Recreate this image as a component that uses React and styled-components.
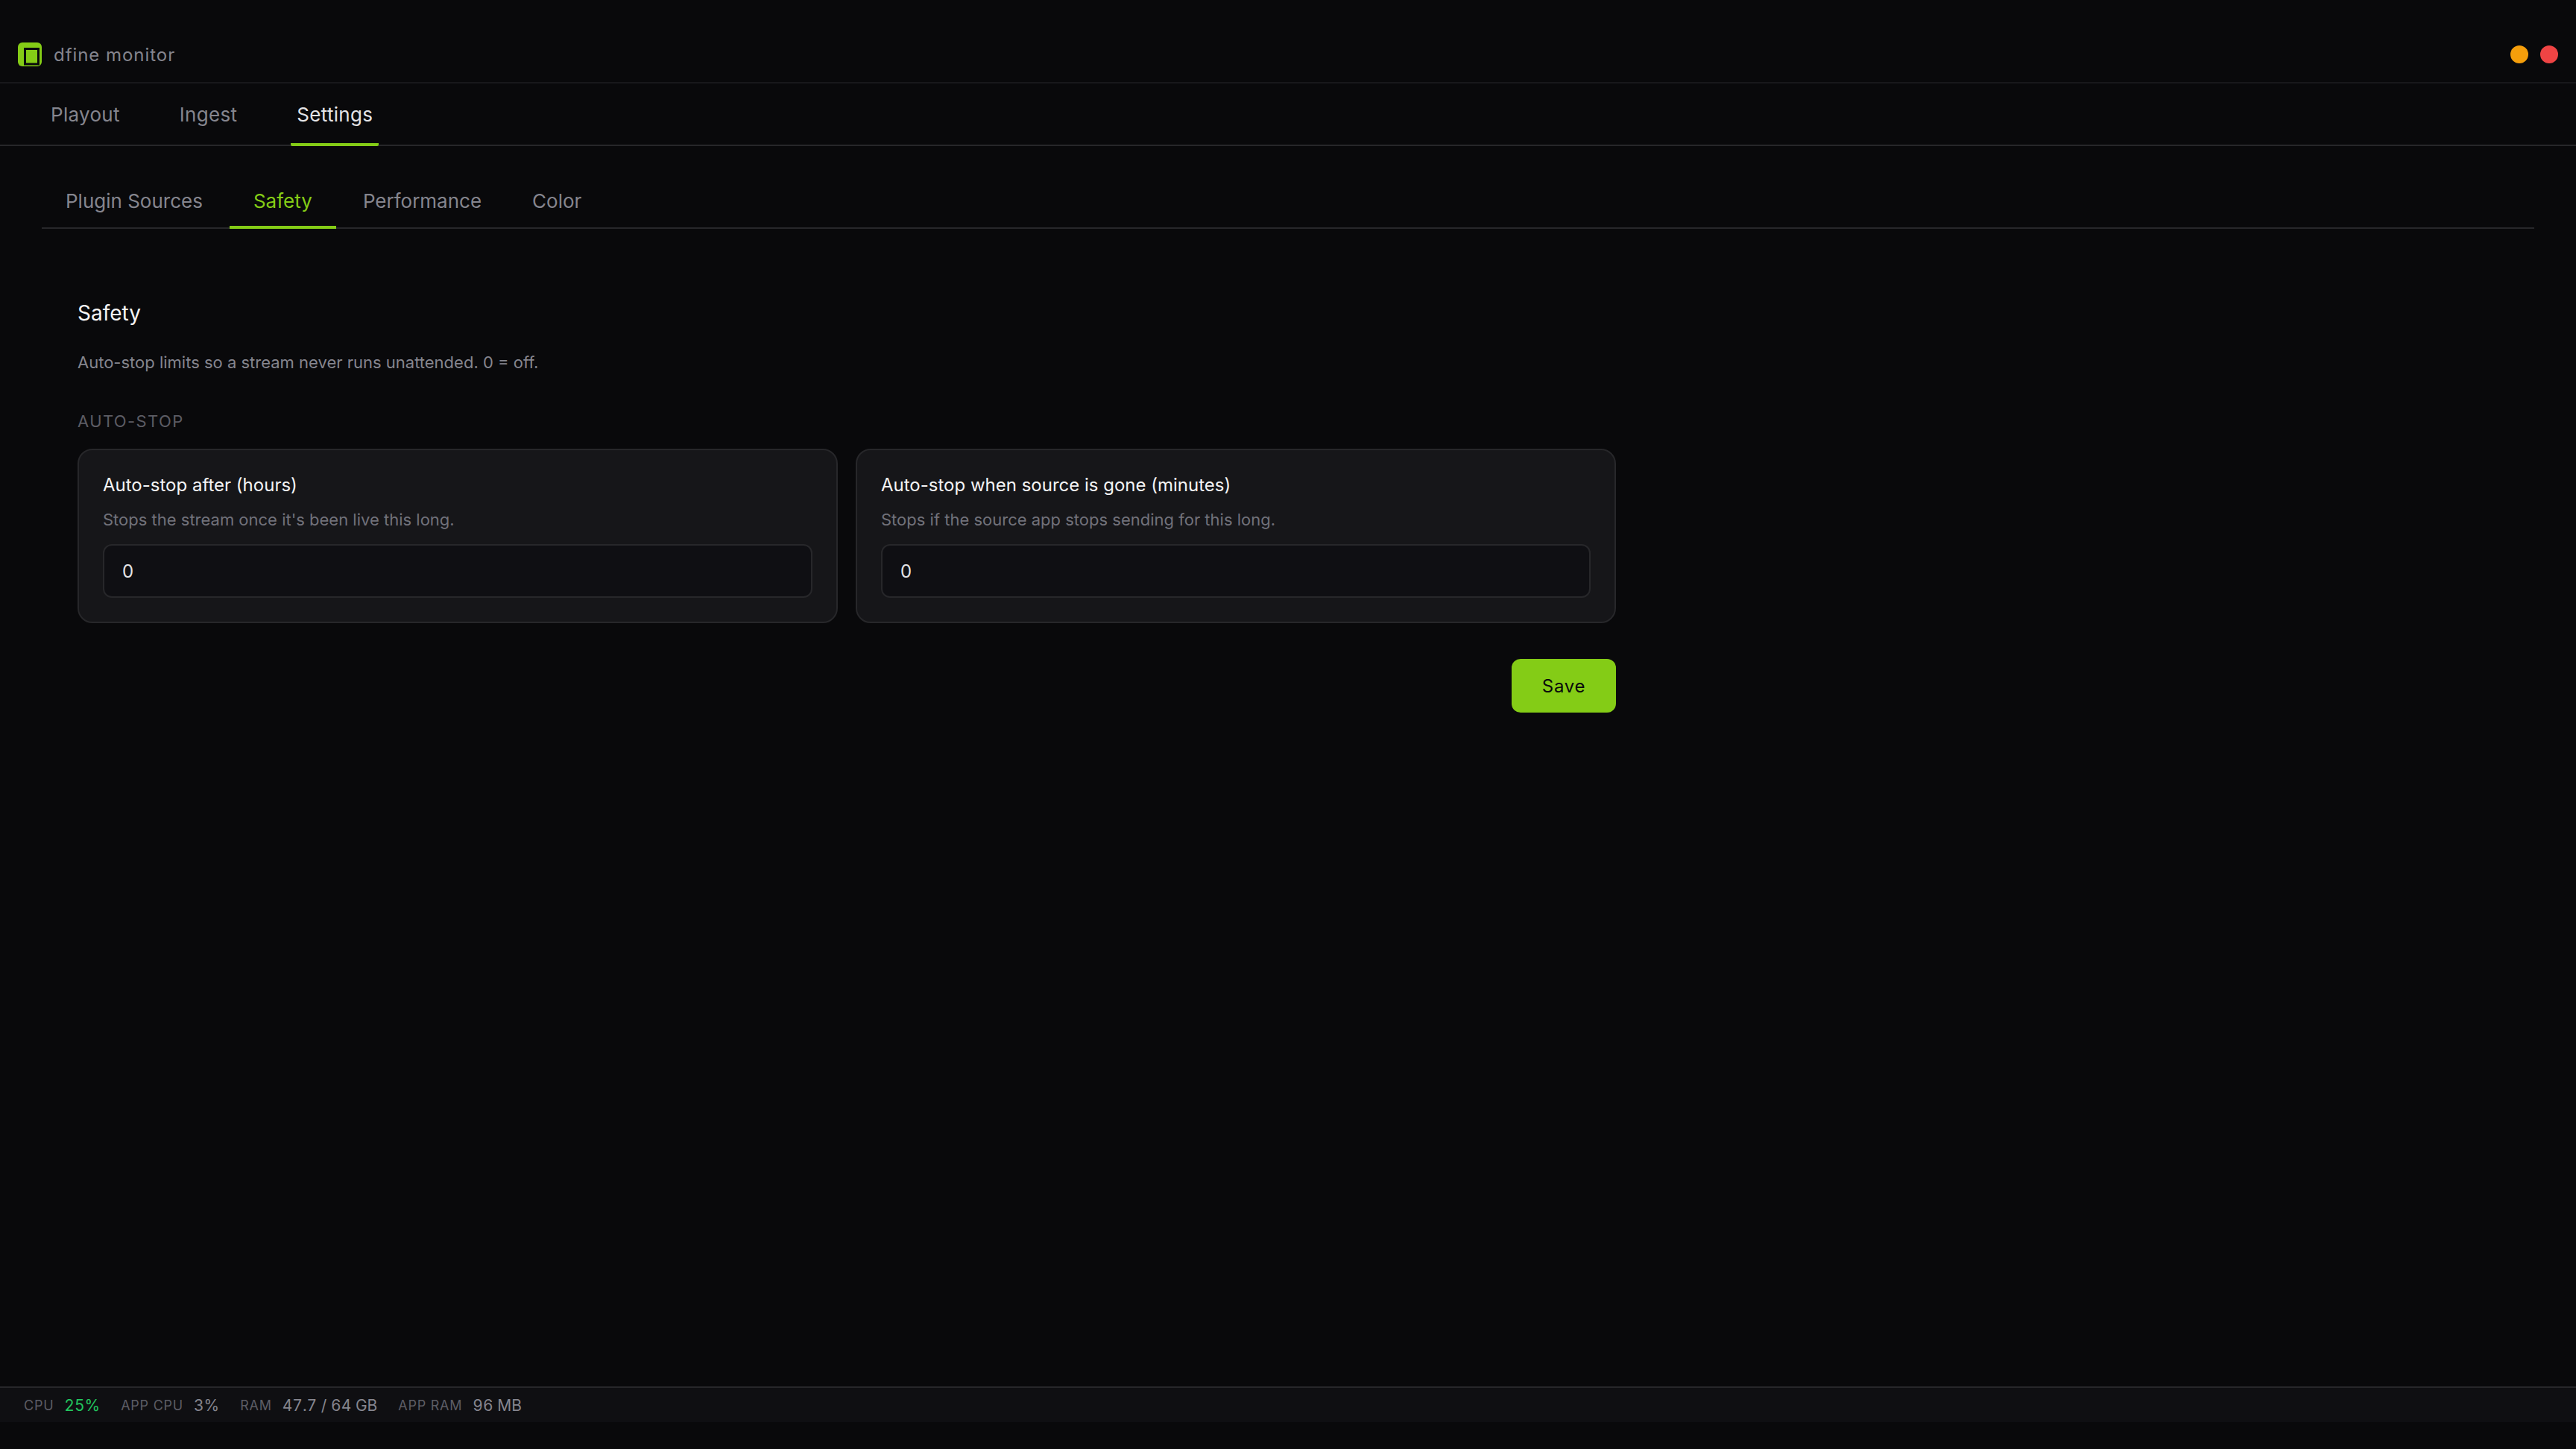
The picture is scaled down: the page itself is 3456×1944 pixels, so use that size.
import styled, { createGlobalStyle } from "styled-components";

const GlobalStyle = createGlobalStyle`
  * {
    box-sizing: border-box;
  }
  html,
  body {
    margin: 0;
    background: #09090b;
  }
  body {
    font-family: Inter, "Liberation Sans", sans-serif;
    color: #e4e4e7;
  }
`;

const Shell = styled.div`
  display: flex;
  flex-direction: column;
  height: 1908px;
  background: #09090b;
`;

const TitleBar = styled.header`
  display: flex;
  align-items: center;
  justify-content: space-between;
  height: 112px;
  padding: 36px 24px 0;
  border-bottom: 2px solid #18181b;
`;

const Brand = styled.div`
  display: flex;
  align-items: center;
  gap: 16px;
  font-size: 24px;
  letter-spacing: 0.95px;
  color: #85858e;
`;

const WindowDots = styled.div`
  display: flex;
  gap: 16px;
`;

const Dot = styled.span`
  width: 24px;
  height: 24px;
  border-radius: 50%;
  background: ${({ $color }) => $color};
`;

const MainNav = styled.nav`
  display: flex;
  gap: 64px;
  height: 84px;
  padding: 0 60px;
  border-bottom: 2px solid #27272a;
`;

const MainTab = styled.button`
  height: 84px;
  padding: 3px 8px 0;
  background: none;
  border: 0;
  border-bottom: 4px solid ${({ $active }) => ($active ? "#84cc16" : "transparent")};
  border-radius: 2px;
  font: inherit;
  font-size: 26px;
  letter-spacing: 0.3px;
  color: ${({ $active }) => ($active ? "#e4e4e7" : "#85858e")};
`;

const Main = styled.main`
  flex: 1;
  padding: 36px 56px 0;
`;

const SubNav = styled.nav`
  display: flex;
  gap: 4px;
  height: 75px;
  border-bottom: 2px solid #27272a;
`;

const SubTab = styled.button`
  height: 75px;
  padding: 4px 32px 0;
  background: none;
  border: 0;
  border-bottom: 4px solid ${({ $active }) => ($active ? "#84cc16" : "transparent")};
  font: inherit;
  font-size: 26px;
  color: ${({ $active }) => ($active ? "#84cc16" : "#85858e")};
`;

const Panel = styled.section`
  width: 2064px;
  margin-left: 48px;
  padding-top: 93px;
`;

const PanelTitle = styled.h2`
  margin: 0;
  font-size: 28px;
  line-height: 40px;
  font-weight: 400;
  color: #f4f4f5;
`;

const PanelText = styled.p`
  margin: 28px 0 0;
  font-size: 22px;
  line-height: 36px;
  color: #85858e;
`;

const GroupLabel = styled.div`
  margin-top: 45px;
  font-size: 22px;
  line-height: 32px;
  letter-spacing: 1.4px;
  text-transform: uppercase;
  color: #5c5c64;
`;

const CardGrid = styled.div`
  display: grid;
  grid-template-columns: 1fr 1fr;
  gap: 24px;
  margin-top: 21px;
`;

const Card = styled.div`
  padding: 32px;
  background: #161619;
  border: 2px solid #27272a;
  border-radius: 20px;
`;

const CardTitle = styled.div`
  font-size: 24px;
  line-height: 30px;
  font-weight: 400;
  color: #f4f4f5;
`;

const CardHint = styled.div`
  margin-top: 13px;
  font-size: 22px;
  line-height: 36px;
  color: #71717a;
`;

const NumberInput = styled.input`
  display: block;
  width: 100%;
  height: 72px;
  margin-top: 15px;
  padding: 0 24px;
  background: #0f0f13;
  border: 2px solid #27272a;
  border-radius: 12px;
  outline: 0;
  font: inherit;
  font-size: 24px;
  color: #e4e4e7;
`;

const Actions = styled.div`
  display: flex;
  justify-content: flex-end;
  margin-top: 48px;
`;

const SaveButton = styled.button`
  width: 140px;
  height: 72px;
  background: #84cc16;
  border: 0;
  border-radius: 12px;
  font: inherit;
  font-size: 24px;
  font-weight: 400;
  letter-spacing: 0.7px;
  color: #09090b;
`;

const StatusBar = styled.footer`
  display: flex;
  align-items: center;
  gap: 28px;
  height: 48px;
  padding: 0 32px;
  background: #0f0f12;
  border-top: 2px solid #27272a;
`;

const Stat = styled.div`
  display: flex;
  align-items: center;
  gap: 14px;
`;

const StatLabel = styled.span`
  font-size: 18px;
  letter-spacing: 0.75px;
  color: #5c5c64;
`;

const StatValue = styled.span`
  font-size: 21px;
  font-variant-numeric: tabular-nums;
  color: ${({ $color }) => $color || "#85858e"};
`;

function LogoMark() {
  return (
    <svg width="32" height="32" viewBox="0 0 32 32">
      <rect width="32" height="32" rx="6" fill="#84cc16" />
      <rect x="9.5" y="8.5" width="18" height="20.5" fill="#84cc16" stroke="#09090b" strokeWidth="3" />
    </svg>
  );
}

const stats = [
  { label: "CPU", value: "25%", color: "#22c55e" },
  { label: "APP CPU", value: "3%" },
  { label: "RAM", value: "47.7 / 64 GB" },
  { label: "APP RAM", value: "96 MB" },
];

export default function App() {
  return (
    <>
      <GlobalStyle />
      <Shell>
        <TitleBar>
          <Brand>
            <LogoMark />
            dfine monitor
          </Brand>
          <WindowDots>
            <Dot $color="#f59e0b" />
            <Dot $color="#ef4444" />
          </WindowDots>
        </TitleBar>
        <MainNav>
          <MainTab>Playout</MainTab>
          <MainTab>Ingest</MainTab>
          <MainTab $active>Settings</MainTab>
        </MainNav>
        <Main>
          <SubNav>
            <SubTab>Plugin Sources</SubTab>
            <SubTab $active>Safety</SubTab>
            <SubTab>Performance</SubTab>
            <SubTab>Color</SubTab>
          </SubNav>
          <Panel>
            <PanelTitle>Safety</PanelTitle>
            <PanelText>Auto-stop limits so a stream never runs unattended. 0 = off.</PanelText>
            <GroupLabel>Auto-stop</GroupLabel>
            <CardGrid>
              <Card>
                <CardTitle>Auto-stop after (hours)</CardTitle>
                <CardHint>Stops the stream once it's been live this long.</CardHint>
                <NumberInput type="text" defaultValue="0" />
              </Card>
              <Card>
                <CardTitle>Auto-stop when source is gone (minutes)</CardTitle>
                <CardHint>Stops if the source app stops sending for this long.</CardHint>
                <NumberInput type="text" defaultValue="0" />
              </Card>
            </CardGrid>
            <Actions>
              <SaveButton>Save</SaveButton>
            </Actions>
          </Panel>
        </Main>
        <StatusBar>
          {stats.map((s) => (
            <Stat key={s.label}>
              <StatLabel>{s.label}</StatLabel>
              <StatValue $color={s.color}>{s.value}</StatValue>
            </Stat>
          ))}
        </StatusBar>
      </Shell>
    </>
  );
}
